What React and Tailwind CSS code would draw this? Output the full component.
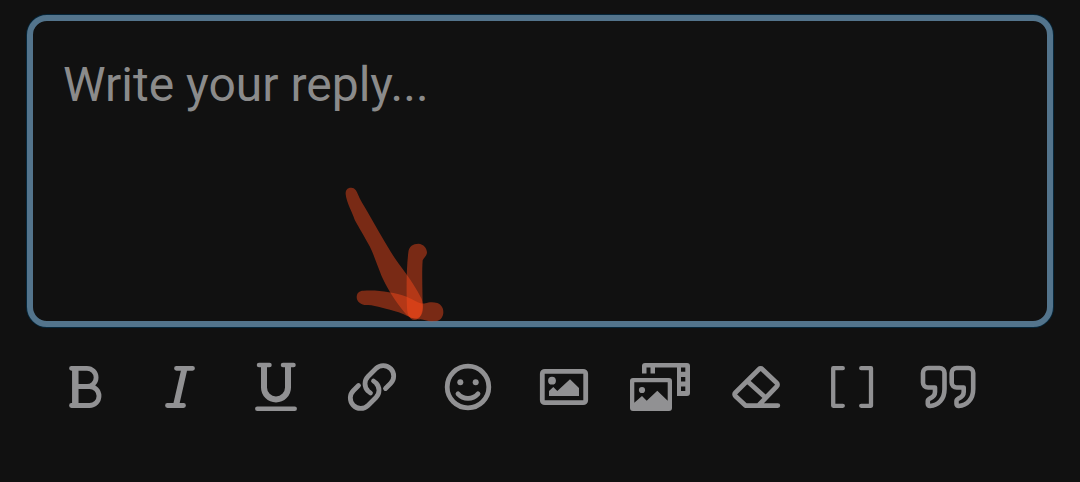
import { useState } from 'react';

const tools = [
  {
    label: 'Bold',
    icon: (
      <>
        <path d="M19.5 5.3H35a9 9 0 0 1 0 18.2H23.5M35 23.5h2.5a9.5 9.5 0 0 1 0 19H19.5" />
        <path strokeWidth="6.5" strokeLinecap="butt" d="M23.3 5.5v37" />
      </>
    ),
  },
  {
    label: 'Italic',
    icon: (
      <>
        <path d="M28.5 5.3h16M19.5 42.5h16" />
        <path strokeWidth="6" strokeLinecap="butt" d="M36.500 5.300l-8.500 37.200" />
      </>
    ),
  },
  {
    label: 'Underline',
    icon: (
      <>
        <path d="M15 2h10.500M39 2h10.500M13.300 45.700h37.400" strokeWidth="4.500" />
        <path strokeWidth="6" strokeLinecap="butt" d="M20 2v22.500a12 12 0 0 0 24 0V2" />
      </>
    ),
  },
  {
    label: 'Insert link',
    icon: (
      <>
        <path d="M45.5 25.5l5-5A10.3 10.3 0 0 0 36 5.5l-8 8a10.3 10.3 0 0 0 0 14.5l2.5 2" />
        <path d="M18.5 22.5l-5 5A10.3 10.3 0 0 0 28 42.5l8-8a10.3 10.3 0 0 0 0-14.5l-2.5-2" />
      </>
    ),
  },
  {
    label: 'Smilies',
    icon: (
      <>
        <circle cx="32" cy="24" r="20.8" />
        <path d="M22 30.8c5.5 6 14.5 6 20 0" />
        <g fill="currentColor" stroke="none">
          <circle cx="24.3" cy="19.3" r="3" />
          <circle cx="39.7" cy="19.3" r="3" />
        </g>
      </>
    ),
  },
  {
    label: 'Insert image',
    icon: (
      <>
        <rect x="10.3" y="8.3" width="43.4" height="31.4" rx="2.5" />
        <g fill="currentColor" stroke="none">
          <circle cx="20" cy="17.7" r="3.9" />
          <path d="M17 33v-5l4.3-4 4 4L38 16.3l9 8.7v8z" />
        </g>
      </>
    ),
  },
  {
    label: 'Media gallery',
    icon: (
      <g fill="currentColor" stroke="none" fillRule="evenodd">
        <path d="M17 0h42a3 3 0 0 1 3 3v27a3 3 0 0 1-3 3H49V4.5H27V10.5h-4.5v-6H18.5v6H14V3a3 3 0 0 1 3-3zM53 4.5v4.3h4.3V4.5zM53 14v4.5h4.3V14zM53 23.5v4.5h4.3v-4.5z" />
        <path d="M5 15h36a3 3 0 0 1 3 3v27a3 3 0 0 1-3 3H5a3 3 0 0 1-3-3V18a3 3 0 0 1 3-3zM6.3 19.3v20.4l7.7-6.7 4.7 4.7 10.6-10 10.4 10V19.3z" />
        <circle cx="14" cy="27" r="3.1" />
      </g>
    ),
  },
  {
    label: 'Remove formatting',
    icon: (
      <path d="M53.8 42.6H21.5L11.3 33a2.3 2.3 0 0 1 0-3.3L35 6.2a2.3 2.3 0 0 1 3.3 0L52.8 20a2.3 2.3 0 0 1 0 3.3L35 41.8M23.7 18.5L41.2 34.3" />
    ),
  },
  {
    label: 'Toggle BB code',
    icon: (
      <path
        strokeWidth="4.3"
        d="M22.8 5.2H13.2v37.6h9.6M41.2 5.2h9.8v37.6h-9.8"
      />
    ),
  },
  {
    label: 'Quote',
    icon: (
      <g strokeWidth="4.6">
        <path d="M12 5h11.5a5 5 0 0 1 5 5v16c0 10-6 16.5-14.5 17a2 2 0 0 1-2.2-2v-3c0-1.5 1-2 2-2.5 3.7-1.5 5.2-3.5 5.2-6.5v-4.5h-7a5 5 0 0 1-5-5V10a5 5 0 0 1 5-5z" />
        <path d="M40.7 5h11.5a5 5 0 0 1 5 5v16c0 10-6 16.5-14.5 17a2 2 0 0 1-2.2-2v-3c0-1.5 1-2 2-2.5 3.7-1.5 5.2-3.5 5.2-6.5v-4.5h-7a5 5 0 0 1-5-5V10a5 5 0 0 1 5-5z" />
      </g>
    ),
  },
];

const ToolButton = ({ label, icon }) => (
  <button type="button" aria-label={label} className="flex h-16 w-24 items-center justify-center">
    <svg
      viewBox="0 0 64 48"
      className="h-12 w-16 overflow-visible"
      fill="none"
      stroke="currentColor"
      strokeWidth="4.8"
      strokeLinecap="round"
      strokeLinejoin="round"
      aria-hidden="true"
    >
      {icon}
    </svg>
  </button>
);

// hand-drawn marker strokes, darker where single and brighter where they cross
const MarkerArrow = () => (
  <svg
    viewBox="0 0 390 480"
    className="pointer-events-none absolute left-[303px] top-[160px] h-[160px] w-[130px]"
    fill="#ff4a1c"
    fillOpacity="0.44"
    aria-hidden="true"
  >
    <path d="M47 58C46 44 54 37 64 38c11 1 15 8 19 18 8 20 18 34 28 52 24 42 48 84 72 124 26 42 62 80 92 140 6 22 6 42-6 54-14 8-32 4-44-12-28-34-50-66-70-110-12-30-22-62-36-90C102 182 88 160 74 134 66 110 50 84 47 58z" />
    <path d="M235 232c2-18 14-26 30-26 16 1 26 14 26 26 0 10-8 14-13 24-3 40 0 100 0 140-2 22-8 38-24 39-16-1-22-16-23-36-2-50-2-120 4-167z" />
    <path d="M80 366c0-12 8-19 20-19 44-3 90 4 130 18 24 10 40 24 56 20 10-4 24-5 36-1 14 6 19 18 18 30-2 16-12 25-26 25-16 2-30-4-42-6-26 2-44-14-66-21-36-10-66-20-92-22-18 2-34-8-34-24z" />
  </svg>
);

const App = () => {
  const [reply, setReply] = useState('');

  return (
    <div className="min-h-screen bg-[#111111] px-[27px] pt-[15px] font-[Roboto,sans-serif]">
      <div className="relative">
        <textarea
          aria-label="Reply"
          placeholder="Write your reply..."
          value={reply}
          onChange={e => setReply(e.target.value)}
          className="block h-[312px] w-full resize-none rounded-[20px] border-6 border-[#53748c] bg-[#111111] px-[30px] pt-9 text-[48px] leading-[56px] text-[#c8c8c8] shadow-[0_0_0_1px_#05263a] outline-none placeholder:text-[#8b8b8b]"
        />
        <MarkerArrow />
      </div>
      <div role="toolbar" aria-label="Formatting" className="mt-7 flex flex-wrap pl-[9px] text-[#919193]">
        {tools.map(tool => (
          <ToolButton key={tool.label} label={tool.label} icon={tool.icon} />
        ))}
      </div>
    </div>
  );
};

export default App;
